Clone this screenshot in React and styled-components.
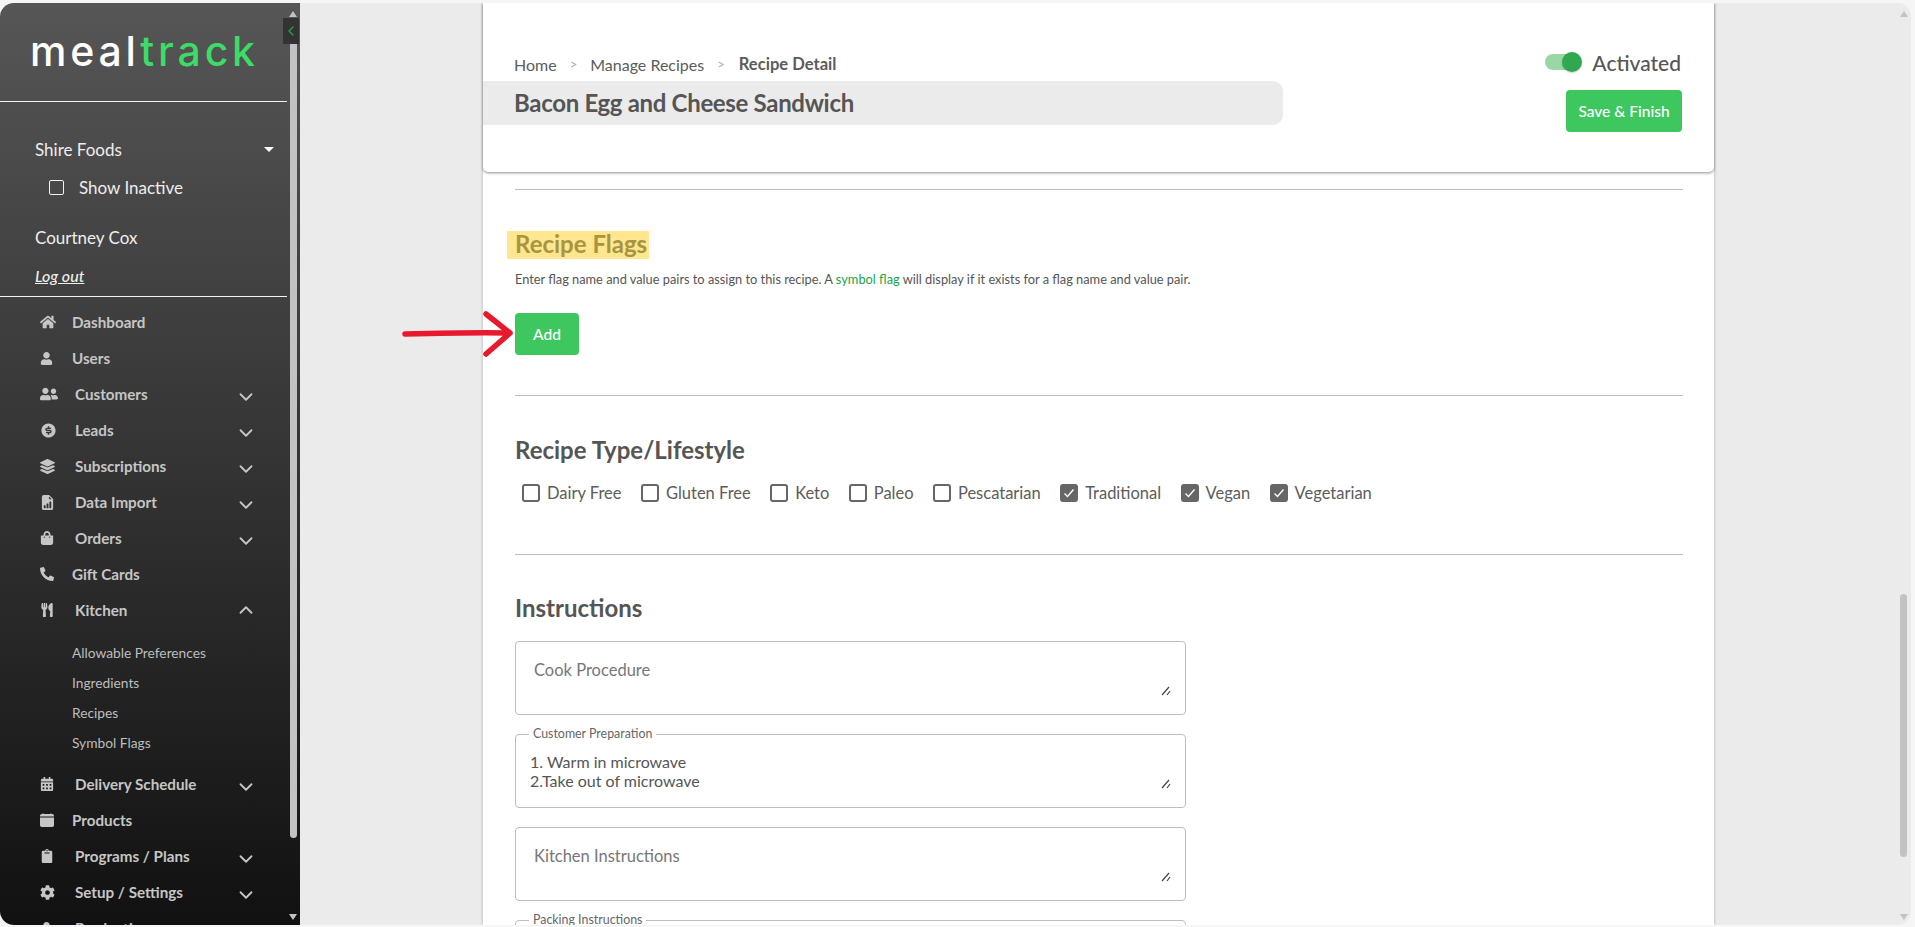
import styled, { createGlobalStyle } from 'styled-components';
import { FaHome, FaUser, FaUserFriends, FaLayerGroup, FaShoppingBag, FaPhoneAlt, FaUtensils, FaCalendarAlt, FaClipboard, FaCog } from 'react-icons/fa';
import { BsFileEarmarkBarGraphFill, BsCalendarFill } from 'react-icons/bs';
import { RiMoneyDollarCircleFill } from 'react-icons/ri';
import { FiChevronDown, FiChevronUp, FiChevronLeft } from 'react-icons/fi';

const GlobalStyle = createGlobalStyle`
    html, body {
        margin: 0;
        height: 100%;
        overflow: hidden;
        background: #f6f6f6;
        font-family: Lato, "Open Sans", sans-serif;
    }
    * { box-sizing: border-box; }
`

const Frame = styled.div`
    display: flex;
    width: 1911px;
    height: 922px;
    margin-top: 3px;
    border-radius: 14px;
    overflow: hidden;
    background: #ebebeb;
`

const Sidebar = styled.aside`
    position: relative;
    flex: 0 0 300px;
    height: 100%;
    overflow: hidden;
    background: linear-gradient(180deg, #565656 0%, #111111 100%);
`

const LogoBar = styled.div`
    display: flex;
    align-items: center;
    width: 287px;
    height: 99px;
    padding: 0 0 3px 30px;
    border-bottom: 1px solid #f2f2f2;
`

const Logo = styled.div`
    font-family: Inter, sans-serif;
    font-size: 41px;
    font-weight: 500;
    letter-spacing: 3.8px;
    line-height: 48px;
    color: #ffffff;
    > span { color: #3ddb68; }
`

const AccountBox = styled.div`
    display: flex;
    flex-direction: column;
    width: 287px;
    height: 195px;
    padding-top: 35px;
    border-bottom: 1px solid #f2f2f2;
    color: #eeeeee;
    font-size: 17px;
`

const AccountRow = styled.div`
    display: flex;
    align-items: center;
    justify-content: space-between;
    height: 24px;
    padding: 0 13px 0 35px;
`

const Caret = styled.span`
    width: 0;
    height: 0;
    border-left: 5px solid transparent;
    border-right: 5px solid transparent;
    border-top: 5px solid #ffffff;
`

const InactiveRow = styled.label`
    display: flex;
    align-items: center;
    gap: 15px;
    height: 24px;
    margin-top: 14px;
    padding-left: 49px;
`

const SmallBox = styled.span`
    width: 15px;
    height: 15px;
    border: 1.5px solid #f2f2f2;
    border-radius: 2px;
`

const UserName = styled.div`
    height: 24px;
    margin-top: 27px;
    padding-left: 35px;
    line-height: 24px;
`

const LogOut = styled.a`
    height: 24px;
    margin-top: 14px;
    padding-left: 35px;
    line-height: 24px;
    font-size: 16px;
    font-style: italic;
    font-weight: 500;
    > span { text-decoration: underline; }
`

const Nav = styled.nav`
    display: flex;
    flex-direction: column;
    width: 288px;
    margin-top: 7px;
`

const NavRow = styled.div`
    display: flex;
    align-items: center;
    flex: 0 0 36px;
    padding: 0 31px 0 40px;
    color: #c6c6c6;
    font-size: 15.2px;
    font-weight: 700;
`

const NavIcon = styled.span`
    display: flex;
    align-items: center;
    flex: 0 0 ${p => p.$wide ? '35px' : '32px'};
    font-size: 15px;
`

const NavChevron = styled.span`
    display: flex;
    margin: ${p => p.$open ? '0' : '5px'} 0 0 auto;
    font-size: 22px;
`

const SubList = styled.div`
    display: flex;
    flex-direction: column;
    margin: 10px 0 8px;
`

const SubRow = styled.div`
    height: 30px;
    padding-left: 72px;
    line-height: 30px;
    color: #bdbdbd;
    font-size: 13.75px;
`

const CollapseTab = styled.div`
    position: absolute;
    top: 15px;
    left: 283px;
    display: flex;
    align-items: center;
    justify-content: center;
    width: 16px;
    height: 26px;
    background: #333333;
    color: #22a34a;
    font-size: 16px;
    z-index: 2;
`

const SideThumb = styled.div`
    position: absolute;
    top: 15px;
    left: 290px;
    width: 7px;
    height: 820px;
    border-radius: 0 0 4px 4px;
    background: #c2c2c2;
`

const ArrowUp = styled.span`
    position: absolute;
    top: ${p => p.$top}px;
    left: ${p => p.$left}px;
    width: 0;
    height: 0;
    border-left: 4px solid transparent;
    border-right: 4px solid transparent;
    border-bottom: 6px solid #c2c2c2;
`

const ArrowDown = styled.span`
    position: absolute;
    bottom: ${p => p.$bottom}px;
    left: ${p => p.$left}px;
    width: 0;
    height: 0;
    border-left: 4px solid transparent;
    border-right: 4px solid transparent;
    border-top: 6px solid #c2c2c2;
`

const Scroller = styled.main`
    display: flex;
    justify-content: center;
    flex: 1;
    height: 100%;
    overflow: hidden;
`

const Column = styled.div`
    position: relative;
    width: 1231px;
    height: 100%;
    background: #ffffff;
    box-shadow: 0 0 3px rgba(0, 0, 0, 0.25);
`

const HeaderCard = styled.header`
    display: flex;
    justify-content: space-between;
    height: 169px;
    border-radius: 0 0 5px 5px;
    background: #ffffff;
    box-shadow: 0 1px 3px rgba(0, 0, 0, 0.45);
`

const HeaderLeft = styled.div`
    display: flex;
    flex-direction: column;
    padding-top: 51px;
`

const Crumbs = styled.div`
    display: flex;
    align-items: center;
    height: 20px;
    padding-left: 31px;
    color: #5c5c5c;
    font-size: 16px;
`

const CrumbSep = styled.span`
    margin: 0 13px;
    color: #aaaaaa;
    font-size: 13px;
`

const CrumbCurrent = styled.span`
    margin-left: 1px;
    font-size: 16.6px;
    font-weight: 700;
`

const TitleBar = styled.h1`
    width: 800px;
    height: 44px;
    margin: 7px 0 0;
    padding-left: 31px;
    border-radius: 0 10px 10px 0;
    background: #ebebeb;
    color: #555555;
    font-size: 24px;
    font-weight: 700;
    letter-spacing: -0.32px;
    line-height: 44px;
`

const HeaderRight = styled.div`
    display: flex;
    flex-direction: column;
    align-items: flex-end;
    padding: 49px 32px 0 0;
`

const ToggleRow = styled.div`
    display: flex;
    align-items: center;
    gap: 10px;
    height: 20px;
    margin-right: 1px;
    color: #555555;
    font-size: 21px;
    font-weight: 500;
`

const ToggleTrack = styled.span`
    position: relative;
    width: 34px;
    height: 16px;
    margin-right: 3px;
    border-radius: 8px;
    background: #9ad7a6;
`

const ToggleThumb = styled.span`
    position: absolute;
    top: -2px;
    right: -3px;
    width: 20px;
    height: 20px;
    border-radius: 50%;
    background: #2fa84f;
    box-shadow: 0 1px 2px rgba(0, 0, 0, 0.2);
`

const GreenButton = styled.button`
    height: 42px;
    width: ${p => p.$width}px;
    margin-top: ${p => p.$top || 0}px;
    padding: 0;
    border: none;
    border-radius: 4px;
    background: #3ec75f;
    color: #ffffff;
    font-family: Lato, sans-serif;
    font-size: 15.5px;
    font-weight: 500;
`

const Body = styled.div`
    display: flex;
    flex-direction: column;
    padding: 0 31px 0 32px;
`

const Divider = styled.hr`
    width: 100%;
    height: 1px;
    margin: ${p => p.$top}px 0 0;
    border: none;
    background: #bdbdbd;
`

const SectionTitle = styled.h2`
    height: 28px;
    margin: ${p => p.$top}px 0 0;
    color: #555555;
    font-size: 24px;
    font-weight: 700;
    line-height: 26px;
`

const Highlight = styled.span`
    display: inline-block;
    height: 28px;
    margin-left: -8px;
    padding: 0 2px 0 8px;
    background: #ffe68f;
    color: #a89540;
`

const HelpText = styled.p`
    margin: 12px 0 0;
    color: #555555;
    font-size: 12.8px;
    line-height: 16px;
    > a { color: #22a34a; }
`

const AddRow = styled.div`
    position: relative;
    margin-top: 26px;
`

const ArrowMark = styled.svg`
    position: absolute;
    top: -2px;
    left: -113px;
`

const FlagRow = styled.div`
    display: flex;
    gap: 19.4px;
    margin: 19px 0 0 7px;
`

const Flag = styled.label`
    display: flex;
    align-items: center;
    gap: 7px;
    height: 18px;
    color: #5c5c5c;
    font-size: 16.5px;
`

const FlagBox = styled.span`
    display: flex;
    align-items: center;
    justify-content: center;
    width: 18px;
    height: 18px;
    border: 2px solid #666666;
    border-radius: 3px;
    background: ${p => p.$checked ? '#666666' : '#ffffff'};
`

const FieldStack = styled.div`
    display: flex;
    flex-direction: column;
    gap: 19px;
    margin-top: 18px;
`

const Field = styled.div`
    position: relative;
    flex: 0 0 74px;
    width: 671px;
    height: 74px;
    padding: ${p => p.$filled ? '17px 14px 0 14px' : '19px 16px 0 18px'};
    border: 1px solid #bdbdbd;
    border-radius: 4px;
    color: ${p => p.$filled ? '#555555' : '#777777'};
    font-size: ${p => p.$filled ? '16px' : '16.5px'};
    line-height: 19px;
    white-space: pre-line;
`

const FieldLegend = styled.span`
    position: absolute;
    top: -8px;
    left: 13px;
    padding: 0 4px;
    background: #ffffff;
    color: #666666;
    font-size: 12.4px;
    line-height: 14px;
`

const Grip = styled.svg`
    position: absolute;
    right: 14px;
    bottom: 18px;
`

const PageScroll = styled.div`
    position: relative;
    flex: 0 0 14px;
    height: 100%;
    background: #ebebeb;
`

const PageThumb = styled.div`
    position: absolute;
    top: 591px;
    left: 3px;
    width: 7px;
    height: 263px;
    border-radius: 4px;
    background: #c2c2c2;
`

const navTop = [
    { label: 'Dashboard', icon: <FaHome size={16} /> },
    { label: 'Users', icon: <FaUser size={13} /> },
    { label: 'Customers', icon: <FaUserFriends size={18} />, more: true },
    { label: 'Leads', icon: <RiMoneyDollarCircleFill size={17} />, more: true },
    { label: 'Subscriptions', icon: <FaLayerGroup />, more: true },
    { label: 'Data Import', icon: <BsFileEarmarkBarGraphFill />, more: true },
    { label: 'Orders', icon: <FaShoppingBag size={14} />, more: true },
    { label: 'Gift Cards', icon: <FaPhoneAlt size={14} /> },
];

const navBottom = [
    { label: 'Delivery Schedule', icon: <FaCalendarAlt size={14} />, more: true },
    { label: 'Products', icon: <BsCalendarFill size={14} /> },
    { label: 'Programs / Plans', icon: <FaClipboard size={14} />, more: true },
    { label: 'Setup / Settings', icon: <FaCog />, more: true },
    { label: 'Production', icon: <FaUser size={13} />, more: true },
];

const kitchenLinks = ['Allowable Preferences', 'Ingredients', 'Recipes', 'Symbol Flags'];

const flags = [
    { label: 'Dairy Free' },
    { label: 'Gluten Free' },
    { label: 'Keto' },
    { label: 'Paleo' },
    { label: 'Pescatarian' },
    { label: 'Traditional', checked: true },
    { label: 'Vegan', checked: true },
    { label: 'Vegetarian', checked: true },
];

const fields = [
    { label: 'Cook Procedure' },
    { label: 'Customer Preparation', value: '1. Warm in microwave\n2.Take out of microwave' },
    { label: 'Kitchen Instructions' },
    { label: 'Packing Instructions', value: ' ' },
];

const NavItem = ({ item }) => (
    <NavRow>
        <NavIcon $wide={item.more}>{item.icon}</NavIcon>
        {item.label}
        {item.more && <NavChevron><FiChevronDown /></NavChevron>}
    </NavRow>
);

const App = () => {
    return (
        <Frame>
            <GlobalStyle />
            <Sidebar>
                <LogoBar>
                    <Logo>meal<span>track</span></Logo>
                </LogoBar>
                <AccountBox>
                    <AccountRow>Shire Foods<Caret /></AccountRow>
                    <InactiveRow><SmallBox />Show Inactive</InactiveRow>
                    <UserName>Courtney Cox</UserName>
                    <LogOut><span>Log out</span></LogOut>
                </AccountBox>
                <Nav>
                    {navTop.map(item => <NavItem key={item.label} item={item} />)}
                    <NavRow>
                        <NavIcon $wide><FaUtensils size={14} /></NavIcon>
                        Kitchen
                        <NavChevron $open><FiChevronUp /></NavChevron>
                    </NavRow>
                    <SubList>
                        {kitchenLinks.map(link => <SubRow key={link}>{link}</SubRow>)}
                    </SubList>
                    {navBottom.map(item => <NavItem key={item.label} item={item} />)}
                </Nav>
                <SideThumb />
                <CollapseTab><FiChevronLeft /></CollapseTab>
                <ArrowUp $top={8} $left={289} />
                <ArrowDown $bottom={5} $left={289} />
            </Sidebar>
            <Scroller>
                <Column>
                    <HeaderCard>
                        <HeaderLeft>
                            <Crumbs>
                                Home<CrumbSep>&gt;</CrumbSep>
                                Manage Recipes<CrumbSep>&gt;</CrumbSep>
                                <CrumbCurrent>Recipe Detail</CrumbCurrent>
                            </Crumbs>
                            <TitleBar>Bacon Egg and Cheese Sandwich</TitleBar>
                        </HeaderLeft>
                        <HeaderRight>
                            <ToggleRow>
                                <ToggleTrack><ToggleThumb /></ToggleTrack>
                                Activated
                            </ToggleRow>
                            <GreenButton $width={116} $top={18}>Save &amp; Finish</GreenButton>
                        </HeaderRight>
                    </HeaderCard>
                    <Body>
                        <Divider $top={17} />
                        <SectionTitle $top={41}><Highlight>Recipe Flags</Highlight></SectionTitle>
                        <HelpText>
                            Enter flag name and value pairs to assign to this recipe. A <a>symbol flag</a> will display if it exists for a flag name and value pair.
                        </HelpText>
                        <AddRow>
                            <ArrowMark width="112" height="46" viewBox="0 0 112 46">
                                <path d="M3 23 C 40 22, 80 21, 108 22 M84 3 L108 22 L84 43" fill="none" stroke="#e8192c" strokeWidth="5.5" strokeLinecap="round" strokeLinejoin="round" />
                            </ArrowMark>
                            <GreenButton $width={64}>Add</GreenButton>
                        </AddRow>
                        <Divider $top={40} />
                        <SectionTitle $top={41}>Recipe Type/Lifestyle</SectionTitle>
                        <FlagRow>
                            {flags.map(flag => (
                                <Flag key={flag.label}>
                                    <FlagBox $checked={flag.checked}>
                                        {flag.checked && (
                                            <svg width="12" height="12" viewBox="0 0 12 12">
                                                <path d="M1.5 6.5 L4.5 9.5 L10.5 2.5" fill="none" stroke="#ffffff" strokeWidth="1.4" />
                                            </svg>
                                        )}
                                    </FlagBox>
                                    {flag.label}
                                </Flag>
                            ))}
                        </FlagRow>
                        <Divider $top={52} />
                        <SectionTitle $top={40}>Instructions</SectionTitle>
                        <FieldStack>
                            {fields.map(field => (
                                <Field key={field.label} $filled={!!field.value}>
                                    {field.value ? <FieldLegend>{field.label}</FieldLegend> : null}
                                    {field.value || field.label}
                                    <Grip width="10" height="10" viewBox="0 0 10 10">
                                        <path d="M1 9 L8 1 M6 9 L9 5" fill="none" stroke="#444444" strokeWidth="1.2" />
                                    </Grip>
                                </Field>
                            ))}
                        </FieldStack>
                    </Body>
                </Column>
            </Scroller>
            <PageScroll>
                <ArrowUp $top={8} $left={3} />
                <PageThumb />
                <ArrowDown $bottom={5} $left={3} />
            </PageScroll>
        </Frame>
    );
}

export default App;
